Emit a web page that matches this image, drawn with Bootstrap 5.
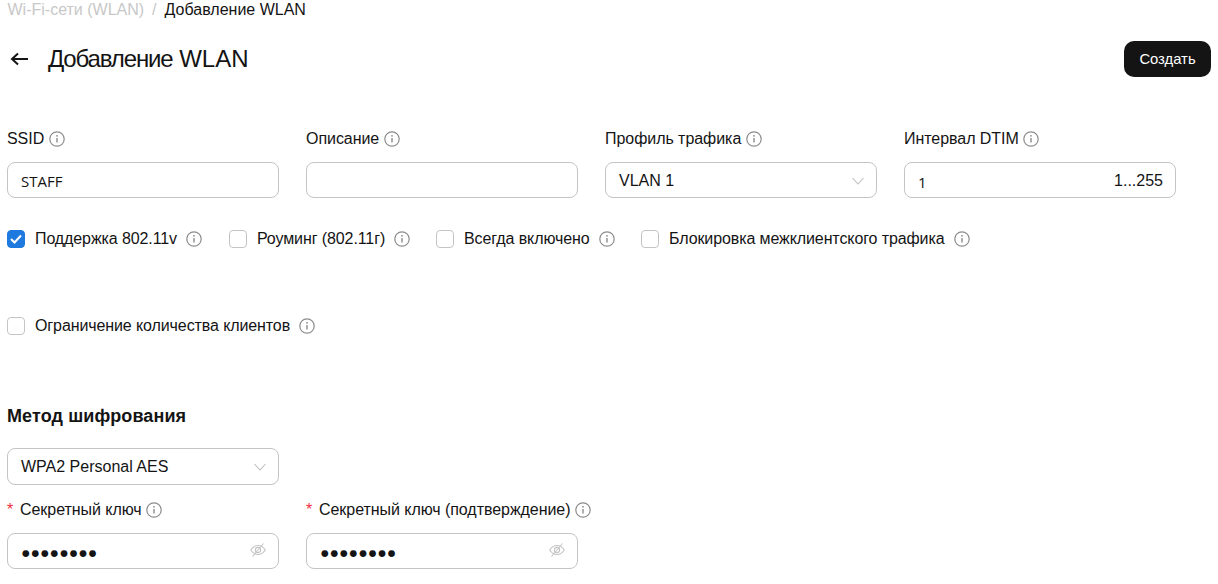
<!DOCTYPE html>
<html lang="ru">
<head>
<meta charset="utf-8">
<title>Добавление WLAN</title>
<link href="https://cdn.jsdelivr.net/npm/bootstrap@5.3.0/dist/css/bootstrap.min.css" rel="stylesheet">
<style>
html,body{height:584px;overflow:hidden}
body{font-family:"Liberation Sans",Arial,sans-serif;font-size:16px;color:#141414;background:#fff}
.pg{padding:0 7px}
.crumbs{height:20px;line-height:20px;font-size:16px;column-gap:8px;padding-left:.5px}
.crumbs .c1{color:#c8c8c8}
.crumbs .c2{color:#c8c8c8}
.head{height:38px;margin-top:20px}
.back{width:41px;display:flex;padding-left:1px}
.ttl{font-size:24px;line-height:38px;font-weight:400;margin:0}
.cyr{letter-spacing:-1.150px}
.go{height:36px;width:87px;background:#141414;color:#fff;border:0;border-radius:10px;font-size:14.800px;padding:0}
.go:hover{background:#141414;color:#fff}
.fgrid{display:grid;grid-template-columns:repeat(4,272px);column-gap:27px;margin-top:49px}
.lab{height:24px;line-height:24px;margin-bottom:11px;gap:4.500px;white-space:nowrap;letter-spacing:-.05px}
.ii{width:16px;height:16px;flex:none}
.box{height:36px;width:272px;border:1px solid #c4c4c4;border-radius:8px;padding:1px 12px 0 13px;background:#fff;font-size:16px;line-height:34px;color:#141414}
input.box{outline:0;display:block;font-family:"Open Sans","Liberation Sans",sans-serif;font-size:15px}
.num{font-family:"Open Sans","Liberation Sans",sans-serif;font-size:15px;padding-top:2px}
.chk{width:18px;height:18px;flex:none;border:1px solid #c4c4c4;border-radius:4px;background:#fff}
.chk.on{background:#1f7ae0;border-color:#1f7ae0}
.opts{height:24px;margin-top:29px}
.opt{gap:10px;height:24px;white-space:nowrap;letter-spacing:-.1px}
.opt .ii{margin-left:-1px}
.o1{width:222px}.o2{width:207px}.o3{width:205px}
.o4{margin-top:63px}
.sect{font-size:18px;font-weight:700;line-height:24px;margin:66px 0 0;letter-spacing:.1px}
.sel2{margin-top:20px;height:37px}
.pg2{display:grid;grid-template-columns:272px 272px;column-gap:27px;margin-top:13px}
.star{color:#f0303c;display:inline-block;width:13px;font-size:16px}
.dots{font-size:15.800px;line-height:36px}
.dots>span{padding-top:2px}
.dots>svg{margin-top:-3px}
.lim{color:#141414}
</style>
</head>
<body>
<div class="pg">
  <nav class="crumbs d-flex">
    <span class="c1">Wi-Fi-сети (WLAN)</span><span class="c2">/</span><span>Добавление WLAN</span>
  </nav>
  <div class="head d-flex align-items-center">
    <span class="back"><svg width="20" height="16" viewBox="0 0 20 16" fill="none" stroke="#141414" stroke-width="2"><path d="M4 8H20.500M10 2.500 4 8l6 5.500"/></svg></span>
    <h1 class="ttl"><span class="cyr">Добавление</span> WLAN</h1>
    <button type="button" class="btn go ms-auto">Создать</button>
  </div>
  <svg width="0" height="0" class="position-absolute"><defs>
    <symbol id="inf" viewBox="0 0 16 16"><circle cx="8" cy="8" r="7.200" fill="none" stroke="#8c8c8c" stroke-width="1.200"/><path d="M8 7v4.500" stroke="#8c8c8c" stroke-width="1.400"/><circle cx="8" cy="4.800" r=".9" fill="#8c8c8c"/></symbol>
    <symbol id="eye" viewBox="0 0 16 16"><g fill="none" stroke="#c4c4c4" stroke-width="1.100"><path d="M.7 8C2.500 5 5 3.500 8 3.500S13.500 5 15.300 8C13.500 11 11 12.500 8 12.500S2.500 11 .7 8Z"/><circle cx="8" cy="8" r="2.600"/><path d="M13.500 1.500 2.500 14.500"/></g></symbol>
  </defs></svg>
  <div class="fgrid">
    <div>
      <div class="lab d-flex align-items-center">SSID <svg class="ii"><use href="#inf"/></svg></div>
      <input class="box" value="STAFF" aria-label="SSID">
    </div>
    <div>
      <div class="lab d-flex align-items-center">Описание <svg class="ii"><use href="#inf"/></svg></div>
      <input class="box" aria-label="Описание">
    </div>
    <div>
      <div class="lab d-flex align-items-center">Профиль трафика <svg class="ii"><use href="#inf"/></svg></div>
      <div class="box d-flex align-items-center justify-content-between">VLAN 1
        <svg width="12" height="8" viewBox="0 0 12 8" fill="none" stroke="#bdbdbd" stroke-width="1.100"><path d="M.5 1 6 7l5.500-6"/></svg></div>
    </div>
    <div>
      <div class="lab d-flex align-items-center">Интервал DTIM <svg class="ii"><use href="#inf"/></svg></div>
      <div class="box d-flex align-items-center justify-content-between"><span class="num">1</span><span class="lim">1...255</span></div>
    </div>
  </div>
  <div class="opts d-flex">
    <div class="opt o1 d-flex align-items-center"><span class="chk on d-flex align-items-center justify-content-center"><svg width="12" height="10" viewBox="0 0 12 10" fill="none" stroke="#fff" stroke-width="2"><path d="M1 5l3.500 3.500L11 1.500"/></svg></span><span>Поддержка 802.11v</span><svg class="ii"><use href="#inf"/></svg></div>
    <div class="opt o2 d-flex align-items-center"><span class="chk"></span><span>Роуминг (802.11г)</span><svg class="ii"><use href="#inf"/></svg></div>
    <div class="opt o3 d-flex align-items-center"><span class="chk"></span><span>Всегда включено</span><svg class="ii"><use href="#inf"/></svg></div>
    <div class="opt d-flex align-items-center"><span class="chk"></span><span>Блокировка межклиентского трафика</span><svg class="ii"><use href="#inf"/></svg></div>
  </div>
  <div class="opt o4 d-flex align-items-center"><span class="chk"></span><span>Ограничение количества клиентов</span><svg class="ii"><use href="#inf"/></svg></div>
  <h2 class="sect">Метод шифрования</h2>
  <div class="box sel2 d-flex align-items-center justify-content-between">WPA2 Personal AES
    <svg width="12" height="8" viewBox="0 0 12 8" fill="none" stroke="#bdbdbd" stroke-width="1.100"><path d="M.5 1 6 7l5.500-6"/></svg></div>
  <div class="pg2">
    <div>
      <div class="lab d-flex align-items-center"><span><span class="star">*</span>Секретный ключ</span> <svg class="ii"><use href="#inf"/></svg></div>
      <div class="box dots d-flex align-items-center justify-content-between"><span>●●●●●●●●</span><svg width="16" height="16"><use href="#eye"/></svg></div>
    </div>
    <div>
      <div class="lab d-flex align-items-center"><span><span class="star">*</span>Секретный ключ (подтверждение)</span> <svg class="ii"><use href="#inf"/></svg></div>
      <div class="box dots d-flex align-items-center justify-content-between"><span>●●●●●●●●</span><svg width="16" height="16"><use href="#eye"/></svg></div>
    </div>
  </div>
</div>
<script src="https://cdn.jsdelivr.net/npm/bootstrap@5.3.0/dist/js/bootstrap.bundle.min.js"></script>
</body>
</html>
